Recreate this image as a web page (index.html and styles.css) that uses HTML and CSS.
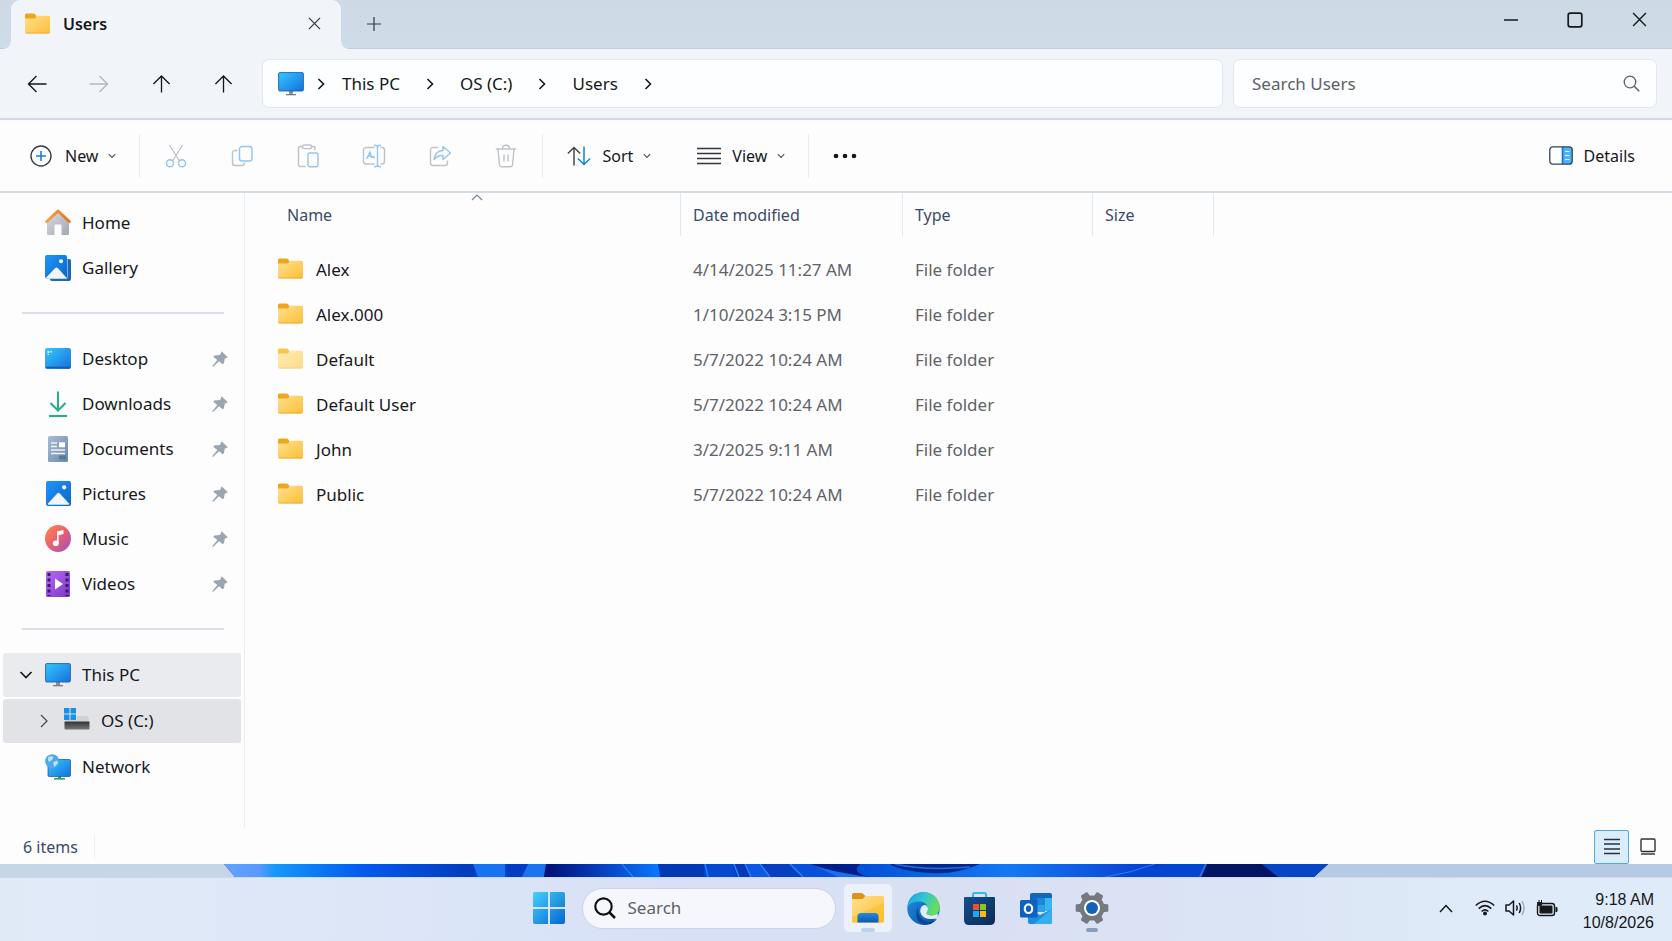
FILE: index.html
```html
<!DOCTYPE html>
<html lang="en">
<head>
<meta charset="utf-8">
<meta name="viewport" content="width=device-width, initial-scale=1">
<title>Users - File Explorer</title>
<link rel="stylesheet" href="styles.css">
</head>
<body>
<svg class="sprite" aria-hidden="true">
  <defs>
    <linearGradient id="gFolder" x1="0" y1="0" x2="1" y2="1"><stop offset="0" stop-color="#ffe090"/><stop offset="1" stop-color="#fcbf35"/></linearGradient>
    <linearGradient id="gFolderPale" x1="0" y1="0" x2="1" y2="1"><stop offset="0" stop-color="#ffebb5"/><stop offset="1" stop-color="#fcdc8a"/></linearGradient>
    <linearGradient id="gScreen" x1="0" y1="0" x2="1" y2="1"><stop offset="0" stop-color="#35c8fb"/><stop offset="1" stop-color="#1670e0"/></linearGradient>
    <linearGradient id="gPhoto" x1="0" y1="0" x2="1" y2="1"><stop offset="0" stop-color="#2196f8"/><stop offset="1" stop-color="#0866c8"/></linearGradient>
    <linearGradient id="gHouse" x1="0" y1="0" x2="1" y2="1"><stop offset="0" stop-color="#d9dce2"/><stop offset="1" stop-color="#a3a7b2"/></linearGradient>
    <linearGradient id="gRoof" x1="0" y1="0" x2="1" y2="0"><stop offset="0" stop-color="#f7a045"/><stop offset="1" stop-color="#e8741d"/></linearGradient>
    <linearGradient id="gDoc" x1="0" y1="0" x2="1" y2="1"><stop offset="0" stop-color="#a9bdd3"/><stop offset="1" stop-color="#6a88aa"/></linearGradient>
    <linearGradient id="gMusic" x1="0" y1="0" x2="1" y2="1"><stop offset="0" stop-color="#ff8a55"/><stop offset=".5" stop-color="#e85f70"/><stop offset="1" stop-color="#9a52c8"/></linearGradient>
    <linearGradient id="gVideo" x1="0" y1="0" x2="1" y2="1"><stop offset="0" stop-color="#b66bf2"/><stop offset="1" stop-color="#7c35c9"/></linearGradient>
    <linearGradient id="gStart" x1="0" y1="0" x2="1" y2="1"><stop offset="0" stop-color="#45d0fb"/><stop offset="1" stop-color="#0567cf"/></linearGradient>
    <linearGradient id="gDrive" x1="0" y1="0" x2="0" y2="1"><stop offset="0" stop-color="#333"/><stop offset="1" stop-color="#777"/></linearGradient>
    <linearGradient id="gStore" x1="0" y1="0" x2="1" y2="1"><stop offset="0" stop-color="#14508e"/><stop offset="1" stop-color="#0c2a56"/></linearGradient>
    <linearGradient id="gEdgeTop" x1="0" y1="0" x2="1" y2=".4"><stop offset="0" stop-color="#1e9be0"/><stop offset=".5" stop-color="#2fc4d8"/><stop offset="1" stop-color="#68dd5a"/></linearGradient>
    <linearGradient id="gEdgeLeft" x1="0" y1="0" x2="1" y2="1"><stop offset="0" stop-color="#1d8fe0"/><stop offset="1" stop-color="#0a50a8"/></linearGradient>
    <linearGradient id="gTray" x1="0" y1="0" x2="0" y2="1"><stop offset="0" stop-color="#2388df"/><stop offset="1" stop-color="#0a5bb0"/></linearGradient>
    <linearGradient id="gWallA" x1="0" y1="0" x2="1" y2="0"><stop offset="0" stop-color="#5fa5ff"/><stop offset=".14" stop-color="#5a98ff"/><stop offset=".2" stop-color="#1798fb"/><stop offset=".36" stop-color="#0a7cf4"/><stop offset=".56" stop-color="#0458ee"/><stop offset="1" stop-color="#023cb8"/></linearGradient>
    <linearGradient id="gWallB" x1="0" y1="0" x2="1" y2="0"><stop offset="0" stop-color="#020f72"/><stop offset=".4" stop-color="#0535b0"/><stop offset="1" stop-color="#0878ff"/></linearGradient>
    <linearGradient id="gWallC" x1="0" y1="0" x2="1" y2="0"><stop offset="0" stop-color="#0050d8"/><stop offset=".5" stop-color="#1478f4"/><stop offset="1" stop-color="#0838cc"/></linearGradient>
  </defs>
  <symbol id="folder" viewBox="0 0 25 21"><path d="M0 3V2Q0 .5 1.500 .5H8.500Q9.500 .5 10.300 1.500L11.500 3V8H0Z" fill="#eea71c"/><path d="M0 5.500H9Q10.500 5.500 11 4Q11.600 2.700 13 2.700H23.500Q25 2.700 25 4.200V19Q25 20.500 23.500 20.500H1.500Q0 20.500 0 19Z" fill="url(#gFolder)"/><path d="M.8 20H24.200" stroke="#e9a72c" stroke-width=".8"/></symbol>
  <symbol id="folder-pale" viewBox="0 0 25 21"><path d="M0 3V2Q0 .5 1.500 .5H8.500Q9.500 .5 10.300 1.500L11.500 3V8H0Z" fill="#f9c646"/><path d="M0 5.500H9Q10.500 5.500 11 4Q11.600 2.700 13 2.700H23.500Q25 2.700 25 4.200V19Q25 20.500 23.500 20.500H1.500Q0 20.500 0 19Z" fill="url(#gFolderPale)"/><path d="M.8 20H24.200" stroke="#efcf7e" stroke-width=".8"/></symbol>
  <symbol id="pc" viewBox="0 0 26 24"><path d="M11 19h4v3h-4z" fill="#8b9097"/><path d="M8 22h10v1.300H8z" fill="#777d85"/><rect x=".6" y=".6" width="24.800" height="18.400" rx="1.200" fill="url(#gScreen)" stroke="#1b62b0" stroke-width=".9"/></symbol>
  <symbol id="chev-right" viewBox="0 0 8 14"><path d="M1.500 2l5 5-5 5" fill="none" stroke="currentColor" stroke-width="1.600"/></symbol>
  <symbol id="chev-down" viewBox="0 0 8 6"><path d="M.8 1.200L4 4.400l3.200-3.200" fill="none" stroke="currentColor" stroke-width="1.100"/></symbol>
  <symbol id="up" viewBox="0 0 20 20"><path d="M10 19V1.500M1.500 10L10 1.500 18.500 10" fill="none" stroke="currentColor" stroke-width="1.400"/></symbol>
  <symbol id="left" viewBox="0 0 20 18"><path d="M19.500 9H1.500M9.500 1L1.500 9l8 8" fill="none" stroke="currentColor" stroke-width="1.400"/></symbol>
  <symbol id="pin" viewBox="0 0 16 16"><path d="M9.500 .3L15.800 6.200 14 7.200 12.800 7.500 11.900 12.300 10.700 13.300 7 10.200 1 15.900 .2 15.200 5.300 9 1.200 5.700 2.400 4.600 7.800 3.900 8.700 2.800Z" fill="#9aa5b1"/></symbol>
  <symbol id="cross" viewBox="0 0 14 14"><path d="M1 1l12 12M13 1L1 13" fill="none" stroke="currentColor" stroke-width="1.300"/></symbol>
</svg>

<div class="window">
  <header class="titlebar">
    <div class="tab">
      <svg class="ic-folder"><use href="#folder"/></svg>
      <span class="tab-title">Users</span>
      <button class="tab-close" aria-label="Close tab"><svg width="13" height="13"><use href="#cross"/></svg></button>
    </div>
    <button class="tab-add" aria-label="New tab"><svg width="14" height="14" viewBox="0 0 14 14"><path d="M7 0v14M0 7h14" stroke="currentColor" stroke-width="1.200"/></svg></button>
    <div class="win-controls">
      <button aria-label="Minimize"><svg width="14" height="14" viewBox="0 0 14 14"><path d="M0 7h14" stroke="currentColor" stroke-width="1.500"/></svg></button>
      <button aria-label="Maximize"><svg width="16" height="16" viewBox="0 0 16 16"><rect x="1.200" y="1.200" width="13.600" height="13.600" rx="2" fill="none" stroke="currentColor" stroke-width="1.700"/></svg></button>
      <button aria-label="Close"><svg width="15" height="15"><use href="#cross"/></svg></button>
    </div>
  </header>

  <div class="navbar">
    <nav class="nav-buttons" aria-label="History">
      <button aria-label="Back"><svg width="20" height="18"><use href="#left"/></svg></button>
      <button class="is-off flip" aria-label="Forward" disabled><svg width="20" height="18"><use href="#left"/></svg></button>
      <button aria-label="Recent"><svg width="19" height="20"><use href="#up"/></svg></button>
      <button aria-label="Up"><svg width="19" height="20"><use href="#up"/></svg></button>
    </nav>
    <nav class="address" aria-label="Address">
      <svg class="ic-pc"><use href="#pc"/></svg>
      <svg class="sep first"><use href="#chev-right"/></svg>
      <a href="#">This PC</a>
      <svg class="sep"><use href="#chev-right"/></svg>
      <a href="#">OS (C:)</a>
      <svg class="sep"><use href="#chev-right"/></svg>
      <a href="#">Users</a>
      <svg class="sep"><use href="#chev-right"/></svg>
    </nav>
    <label class="search">
      <input type="text" placeholder="Search Users" aria-label="Search Users">
      <svg width="17" height="17" viewBox="0 0 17 17"><circle cx="7" cy="7" r="5.800" fill="none" stroke="currentColor" stroke-width="1.300"/><path d="M11.200 11.200L16.200 16.200" stroke="currentColor" stroke-width="1.500"/></svg>
    </label>
  </div>

  <div class="toolbar" role="toolbar">
    <button class="cmd cmd-new"><svg width="22" height="22" viewBox="0 0 22 22"><circle cx="11" cy="11" r="10" fill="none" stroke="#3a3f45" stroke-width="1.400"/><path d="M11 6v10M6 11h10" stroke="#1683e0" stroke-width="1.600"/></svg>New<svg class="caret"><use href="#chev-down"/></svg></button>
    <span class="rule"></span>
    <div class="tools">
      <button disabled aria-label="Cut"><svg width="22" height="24" viewBox="0 0 22 24"><g fill="none" stroke-width="1.400"><path d="M4.500 1L14.500 17M17.500 1L7.500 17" stroke="#bfc2c7"/><circle cx="5" cy="19.300" r="3.500" stroke="#94c4f0"/><circle cx="17" cy="19.300" r="3.500" stroke="#94c4f0"/></g></svg></button>
      <button disabled aria-label="Copy"><svg width="22" height="22" viewBox="0 0 22 22"><g fill="none" stroke-width="1.400"><path d="M6.500 5.500H4Q1.500 5.500 1.500 8v10Q1.500 20.500 4 20.500H11Q13.500 20.500 13.500 17.500" stroke="#bfc2c7"/><rect x="8.500" y="1.500" width="12.500" height="14.500" rx="2.500" stroke="#94c4f0"/></g></svg></button>
      <button disabled aria-label="Paste"><svg width="22" height="24" viewBox="0 0 22 24"><g fill="none" stroke-width="1.400"><path d="M8.500 22.500H3Q1.500 22.500 1.500 21V4Q1.500 2.500 3 2.500H5.500M14 2.500H16.500Q18 2.500 18 4V6.500" stroke="#bfc2c7"/><rect x="5.500" y="1" width="9" height="3.600" rx="1.600" stroke="#bfc2c7"/><rect x="11" y="9" width="10" height="13.700" rx="1.600" stroke="#94c4f0"/></g></svg></button>
      <button disabled aria-label="Rename"><svg width="24" height="24" viewBox="0 0 24 24"><g fill="none" stroke-width="1.400"><path d="M12.500 3.500H4Q1.500 3.500 1.500 6v11Q1.500 20 4 20H12.500M18.500 3.500H20Q22.500 3.500 22.500 6V17Q22.500 20 20 20H18.500" stroke="#bfc2c7"/><path d="M15.500 2v20M12 1.200Q15.500 1.200 15.500 3Q15.500 1.200 19 1.200M12 22.800Q15.500 22.800 15.500 21Q15.500 22.800 19 22.800M4.500 15L8 8 9.500 13.500 11.500 12.500 12.500 14.500M5.500 12.500L9 11.500" stroke="#94c4f0"/></g></svg></button>
      <button disabled aria-label="Share"><svg width="23" height="22" viewBox="0 0 23 22"><g fill="none" stroke-width="1.400" stroke-linejoin="round"><path d="M9 2.500H4Q1.500 2.500 1.500 5V17.500Q1.500 20.500 4 20.500H16Q18.500 20.500 18.500 17.500V15.500" stroke="#bfc2c7"/><path d="M14 1.500L21.500 8 14 14.500V10.500Q8.500 10 5 14.500Q6.500 5.500 14 5.500Z" stroke="#94c4f0"/></g></svg></button>
      <button disabled aria-label="Delete"><svg width="22" height="24" viewBox="0 0 22 24"><g fill="none" stroke="#bfc2c7" stroke-width="1.400"><path d="M.8 5H21.200M7.500 4.500Q7.500 1.200 11 1.200T14.500 4.500M3 5L4.500 21Q4.700 22.700 6.500 22.700H15.500Q17.300 22.700 17.500 21L19 5M9 10.500V17.500M13 10.500V17.500"/></g></svg></button>
    </div>
    <span class="rule"></span>
    <button class="cmd cmd-sort"><svg width="24" height="20" viewBox="0 0 24 20"><g fill="none" stroke-width="1.500"><path d="M7 19.500V1.500M.8 7.500L7 1.500l6.200 6" stroke="#44484e"/><path d="M17 .5V18.500M10.800 12.500L17 18.500l6.200-6" stroke="#1683e0"/></g></svg>Sort<svg class="caret"><use href="#chev-down"/></svg></button>
    <button class="cmd cmd-view"><svg width="24" height="18" viewBox="0 0 24 18"><path d="M0 1.500H24M0 6.500H24M0 11.500H24M0 16.500H24" stroke="#33373c" stroke-width="1.300"/></svg>View<svg class="caret"><use href="#chev-down"/></svg></button>
    <span class="rule"></span>
    <button class="more" aria-label="See more"><svg width="24" height="6" viewBox="0 0 24 6"><g fill="#16181b"><circle cx="3" cy="3" r="2.300"/><circle cx="12" cy="3" r="2.300"/><circle cx="21" cy="3" r="2.300"/></g></svg></button>
    <button class="cmd cmd-details"><svg width="24" height="19" viewBox="0 0 24 19"><rect x=".8" y=".8" width="22.400" height="17.400" rx="3" fill="#fff"/><path d="M13 .8H20Q23.200 .8 23.200 4V15Q23.200 18.200 20 18.200H13Z" fill="#4db4f5"/><path d="M16 5.500H20.500M16 9.500H20.500M16 13.500H20.500" stroke="#e3f4ff" stroke-width="1.200"/><path d="M13.500 1V18" stroke="#1272cc" stroke-width="1.600"/><rect x=".8" y=".8" width="22.400" height="17.400" rx="3" fill="none" stroke="#31465c" stroke-width="1.300"/></svg>Details</button>
  </div>

  <div class="body">
    <aside class="sidebar">
      <ul class="places">
        <li><a href="#"><span class="ico"><svg width="26" height="27" viewBox="0 0 26 27"><path d="M2 12L13 2.500 24 12V24.500Q24 26 22.500 26H16.500V16.500Q16.500 15.500 15.500 15.500H10.500Q9.500 15.500 9.500 16.500V26H3.500Q2 26 2 24.500Z" fill="url(#gHouse)"/><path d="M1.700 12.500L13 2 24.300 12.500" fill="none" stroke="url(#gRoof)" stroke-width="3" stroke-linecap="round" stroke-linejoin="round"/></svg></span>Home</a></li>
        <li><a href="#"><span class="ico"><svg width="26" height="26" viewBox="0 0 26 26"><rect x="5" y="4" width="21" height="22" rx="2" fill="#1c69bb"/><rect x="0" y="0" width="22.500" height="24" rx="2" fill="#e9f3fd"/><rect x="0" y="0" width="22" height="23.500" rx="2" fill="url(#gPhoto)"/><path d="M1 22.800L10.200 13Q11.500 11.800 12.800 13L21.500 22.800Q21 23.500 20 23.500H2.500Q1.500 23.500 1 22.800Z" fill="#f1f5fd"/><circle cx="16" cy="6.200" r="2" fill="#fff"/></svg></span>Gallery</a></li>
      </ul>
      <hr>
      <ul class="places">
        <li><a href="#"><span class="ico"><svg width="26" height="21" viewBox="0 0 26 21"><rect width="26" height="21" rx="2" fill="url(#gScreen)"/><path d="M1 19.500H25" stroke="#115bb8" stroke-width="1.600"/><path d="M2.500 3h2v2h-2zM5.500 3h1.500v1.500H5.500zM2.500 6h1.500v1H2.500z" fill="#dff6ff"/></svg></span>Desktop<svg class="pin"><use href="#pin"/></svg></a></li>
        <li><a href="#"><span class="ico"><svg width="20" height="26" viewBox="0 0 20 26"><path d="M10 .5V19M2.500 12L10 19.500 17.500 12M1 25H19" fill="none" stroke="#20b08c" stroke-width="2"/></svg></span>Downloads<svg class="pin"><use href="#pin"/></svg></a></li>
        <li><a href="#"><span class="ico"><svg width="20" height="26" viewBox="0 0 20 26"><rect width="20" height="26" rx="1.600" fill="url(#gDoc)"/><path d="M3 7H9M3 10.500H9M3 14H17M3 17.500H17" stroke="#eef4fa" stroke-width="1.300"/><rect x="11" y="6.300" width="6" height="5" fill="#fff"/><rect x="11" y="19.500" width="7" height="4" fill="#56789c"/></svg></span>Documents<svg class="pin"><use href="#pin"/></svg></a></li>
        <li><a href="#"><span class="ico"><svg width="25" height="25" viewBox="0 0 25 25"><rect width="25" height="25" rx="2" fill="url(#gPhoto)"/><path d="M1.500 23L11.200 12.500Q12.500 11.200 13.800 12.500L23.500 23Q23 23.700 22 23.700H3Q2 23.700 1.500 23Z" fill="#f1f5fd"/><circle cx="18.200" cy="6.300" r="2.100" fill="#fff"/></svg></span>Pictures<svg class="pin"><use href="#pin"/></svg></a></li>
        <li><a href="#"><span class="ico"><svg width="26" height="27" viewBox="0 0 26 27"><ellipse cx="13" cy="13.500" rx="13" ry="13.500" fill="url(#gMusic)"/><path d="M12 6.500L18.500 5V9L13.600 10.200V17.500L12 18Z" fill="#fff"/><ellipse cx="10.800" cy="18.200" rx="3" ry="2.800" fill="#fff"/></svg></span>Music<svg class="pin"><use href="#pin"/></svg></a></li>
        <li><a href="#"><span class="ico"><svg width="24" height="26" viewBox="0 0 24 26"><rect width="24" height="26" rx="1.600" fill="url(#gVideo)"/><path d="M3 2V25M21 2V25" stroke="#3c1673" stroke-width="3" stroke-dasharray="3 2.500"/><path d="M9 7.500L17 13 9 18.500Z" fill="#fff"/></svg></span>Videos<svg class="pin"><use href="#pin"/></svg></a></li>
      </ul>
      <hr>
      <ul class="places tree">
        <li class="open"><a href="#"><svg class="twist" width="14" height="10" viewBox="0 0 14 10"><path d="M1.500 2L7 7.500 12.500 2" fill="none" stroke="currentColor" stroke-width="1.700"/></svg><span class="ico"><svg class="ic-pc"><use href="#pc"/></svg></span>This PC</a></li>
        <li class="selected child"><a href="#"><svg class="twist" width="14" height="14" viewBox="0 0 14 14"><path d="M4 1L10 7 4 13" fill="none" stroke="currentColor" stroke-width="1.300"/></svg><span class="ico"><svg width="26" height="26" viewBox="0 0 26 26"><path d="M13 8H22Q24 8 25 11L25.500 14H1L2 12H13Z" fill="#cfd1d4"/><rect x=".5" y="13.500" width="25" height="8" rx=".8" fill="url(#gDrive)"/><path d="M0 0h5.500v5.500H0zM6.500 0H12v5.500H6.500zM0 6.500h5.500V12H0zM6.500 6.500H12V12H6.500z" fill="#1b8fe4"/></svg></span>OS (C:)</a></li>
        <li><a href="#"><span class="ico"><svg width="26" height="26" viewBox="0 0 26 26"><path d="M13 22h3v2.500h-3z" fill="#2f9c63"/><path d="M9 24h11v1.600H9z" fill="#2f9c63"/><rect x="3" y="5.500" width="22.500" height="17" rx="1.200" fill="url(#gScreen)" stroke="#1b62b0" stroke-width=".8"/><circle cx="7.200" cy="7.200" r="7" fill="#4fa8ea"/><path d="M3 3.500Q6 1.500 8.500 3L7 6 3.500 8ZM8 8.500L12 6.500 13 9 9.500 13Z" fill="#bfe4fb"/></svg></span>Network</a></li>
      </ul>
    </aside>

    <main class="content">
      <table class="files">
        <colgroup><col class="c-name"><col class="c-date"><col class="c-type"><col class="c-size"></colgroup>
        <thead>
          <tr><th scope="col"><svg class="sorted" width="12" height="7" viewBox="0 0 12 7"><path d="M1 6L6 1l5 5" fill="none" stroke="#7e838b" stroke-width="1.200"/></svg>Name</th><th scope="col">Date modified</th><th scope="col">Type</th><th scope="col">Size</th></tr>
        </thead>
        <tbody>
          <tr><td><div class="name"><svg class="ic-folder"><use href="#folder"/></svg>Alex</div></td><td>4/14/2025 11:27 AM</td><td>File folder</td><td></td></tr>
          <tr><td><div class="name"><svg class="ic-folder"><use href="#folder"/></svg>Alex.000</div></td><td>1/10/2024 3:15 PM</td><td>File folder</td><td></td></tr>
          <tr><td><div class="name"><svg class="ic-folder"><use href="#folder-pale"/></svg>Default</div></td><td>5/7/2022 10:24 AM</td><td>File folder</td><td></td></tr>
          <tr><td><div class="name"><svg class="ic-folder"><use href="#folder"/></svg>Default User</div></td><td>5/7/2022 10:24 AM</td><td>File folder</td><td></td></tr>
          <tr><td><div class="name"><svg class="ic-folder"><use href="#folder"/></svg>John</div></td><td>3/2/2025 9:11 AM</td><td>File folder</td><td></td></tr>
          <tr><td><div class="name"><svg class="ic-folder"><use href="#folder"/></svg>Public</div></td><td>5/7/2022 10:24 AM</td><td>File folder</td><td></td></tr>
        </tbody>
      </table>
    </main>
  </div>

  <footer class="statusbar">
    <span class="count">6 items</span>
    <div class="view-modes">
      <button class="active" aria-label="Details view"><svg width="16" height="17" viewBox="0 0 16 17"><path d="M0 1.500H16M0 6H16M0 11H16M0 15.500H16" stroke="#2d3136" stroke-width="1.400"/></svg></button>
      <button aria-label="Large icons view"><svg width="16" height="17" viewBox="0 0 16 17"><rect x="1" y="1" width="14" height="12.500" rx="1.200" fill="none" stroke="#2d3136" stroke-width="1.400"/><path d="M1 16H15" stroke="#2d3136" stroke-width="1.400"/></svg></button>
    </div>
  </footer>
</div>

<svg class="wallpaper" viewBox="0 0 1672 13" preserveAspectRatio="none" aria-hidden="true">
  <path d="M224 0H1328L1314 13H235Z" fill="#0345d0"/>
  <path d="M224 0H475V13H235Z" fill="url(#gWallA)"/>
  <path d="M473 0H505V13H478Z" fill="#1873f2"/>
  <path d="M507 0H528L522 13H507Z" fill="#023cc0"/>
  <path d="M528 0H546L544 13H522Z" fill="#1a74f0"/>
  <path d="M546 0H658L660 13H544Z" fill="url(#gWallB)"/>
  <path d="M622 0Q627 6 633 13" stroke="#3c96ff" stroke-width="1" fill="none"/>
  <path d="M658 0H704V13H661Z" fill="#0238b4"/>
  <path d="M704 0H732L736 13H709Z" fill="#0648d0"/>
  <path d="M733 0H745L750 13H737Z" fill="#0539b6"/>
  <path d="M746 0H761L769 13H750Z" fill="#0a58e4"/>
  <path d="M761 0H790L803 13H769Z" fill="#053fc0"/>
  <path d="M790 0H811L840 13H803Z" fill="#0750dc"/>
  <path d="M705 0L708 13M734 0L739 13M745 0L751 13M760 0L770 13M790 0L803 13" stroke="#2583f5" stroke-width="1.500" fill="none"/>
  <path d="M811 0H900V13H840Z" fill="#021f88"/>
  <path d="M811 0Q830 8 870 13H838Z" fill="#1670f0"/>
  <path d="M860 0H1165Q1140 9 1110 13H870Q850 9 860 0Z" fill="url(#gWallC)"/>
  <path d="M890 0H980Q955 11 930 9Q900 7 890 0Z" fill="#032889"/>
  <path d="M895 0Q925 7 970 3" stroke="#1e6fe2" stroke-width="1.500" fill="none"/>
  <path d="M1155 0Q1130 9 1105 13" stroke="#2a7cf5" stroke-width="1" fill="none"/>
  <path d="M1206 0H1328L1314 13H1200Z" fill="#031462"/>
  <path d="M1206 0L1200 13" stroke="#2f6ee8" stroke-width="2"/>
  <path d="M1262 0H1328L1314 13H1278Z" fill="#0646c4"/>
</svg>

<footer class="taskbar">
  <div class="pinned">
    <button class="start" aria-label="Start"><svg width="32" height="32" viewBox="0 0 32 32"><path d="M2 0H15V15H0V2Q0 0 2 0ZM17 0H30Q32 0 32 2V15H17ZM0 17H15V32H2Q0 32 0 30ZM17 17H32V30Q32 32 30 32H17Z" fill="url(#gStart)"/></svg></button>
    <label class="task-search">
      <svg width="22" height="22" viewBox="0 0 22 22"><circle cx="9.500" cy="9.500" r="8.200" fill="none" stroke="#111" stroke-width="2.200"/><path d="M15.500 15.500L21 21" stroke="#111" stroke-width="2.500"/></svg>
      <input type="text" placeholder="Search" aria-label="Search">
    </label>
    <button class="app current" aria-label="File Explorer"><svg width="32" height="30" viewBox="0 0 32 30"><path d="M0 2Q0 0 2 0H10L13.500 3V9H0Z" fill="#dd9412"/><path d="M0 6H10.500L13.500 3H30.500Q32 3 32 4.500V28Q32 29.500 30.500 29.500H1.500Q0 29.500 0 28Z" fill="url(#gFolder)"/><path d="M0 24L32 10V28Q32 29.500 30.500 29.500H1.500Q0 29.500 0 28Z" fill="#fcc022" opacity=".6"/><path d="M5.500 29.500V23.500Q5.500 20 9 20H23Q26.500 20 26.500 23.500V29.500Z" fill="url(#gTray)"/></svg></button>
    <button class="app" aria-label="Edge"><svg width="33" height="33" viewBox="0 0 33 33"><circle cx="16.500" cy="16.500" r="16.200" fill="url(#gEdgeLeft)"/><path d="M.4 15Q2 .3 16.500 .3C27 .3 32.700 8 32.700 15.500C32.700 21 28.500 23.500 24.500 23.500C21.500 23.500 19.500 22.500 19.500 21.300C19.500 20 21 19.500 21 17C21 13 17.500 9.500 12 9.500C6 9.500 1.800 12 .4 15Z" fill="url(#gEdgeTop)"/><path d="M11.500 14.500C9.500 21 13.500 29.500 22.500 29.500C26 29.500 28 28.500 30 26.500C26.500 32.500 20 33.500 15.500 32.600C9 30 7.500 20 11.500 14.500Z" fill="#0b4796"/><path d="M13.200 19Q13.500 12.800 18.500 13C20.500 14.500 21 16 21 17C21 19.500 19.500 20 19.500 21.300C19.500 22.500 21.500 23.500 24.500 23.500C27 23.500 30 22.500 31.200 21L30.200 26.200C26 27.500 14.500 28.500 13.200 19Z" fill="#e4ecf8"/></svg></button>
    <button class="app" aria-label="Microsoft Store"><svg width="31" height="33" viewBox="0 0 31 33"><path d="M9 6V2.500Q9 1 10.500 1H20.500Q22 1 22 2.500V6" fill="none" stroke="#3cb4e6" stroke-width="2"/><path d="M0 6Q0 5 1 5H30Q31 5 31 6V28Q31 33 26 33H5Q0 33 0 28Z" fill="url(#gStore)"/><path d="M9 12h6v6H9z" fill="#f0512a"/><path d="M16 12h6v6h-6z" fill="#86c91f"/><path d="M9 19h6v6H9z" fill="#25a4ea"/><path d="M16 19h6v6h-6z" fill="#fbb917"/></svg></button>
    <button class="app" aria-label="Outlook"><svg width="32" height="31" viewBox="0 0 32 31"><path d="M10 2Q10 0 12 0H30Q32 0 32 2V18H10Z" fill="#1267bd"/><path d="M17 5H25V12H17Z" fill="#1a86dc"/><path d="M25 5H32V18H25Z" fill="#38b6f2"/><path d="M17 12H25V19H17Z" fill="#2f9fe8"/><path d="M8 16L20 22 32 16V29Q32 31 30 31H10Q8 31 8 29Z" fill="#1c8ee0"/><path d="M32 16L14 31H30Q32 31 32 29Z" fill="#36aef0"/><rect y="7" width="17.500" height="17.500" rx="1.600" fill="#0d62bf"/><ellipse cx="8.500" cy="15.700" rx="3.700" ry="4.300" fill="none" stroke="#fff" stroke-width="2.200"/></svg></button>
    <button class="app running" aria-label="Settings"><svg width="34" height="34" viewBox="-17 -17 34 34"><g fill="#73797f"><circle r="12.500"/><path id="tooth" d="M-4.500 -10L-3.600 -16.300H3.600L4.500 -10Z" transform="rotate(30)"/><use href="#tooth" transform="rotate(60)"/><use href="#tooth" transform="rotate(120)"/><use href="#tooth" transform="rotate(180)"/><use href="#tooth" transform="rotate(240)"/><use href="#tooth" transform="rotate(300)"/></g><circle r="8" fill="#fff"/><circle r="6" fill="#1461b8"/></svg></button>
  </div>
  <div class="tray">
    <button aria-label="Show hidden icons"><svg width="14" height="9" viewBox="0 0 14 9"><path d="M1 8L7 1.500 13 8" fill="none" stroke="currentColor" stroke-width="1.500"/></svg></button>
    <button class="status" aria-label="Network, volume and battery">
      <svg width="20" height="16" viewBox="0 0 20 16"><g fill="none" stroke="currentColor" stroke-width="1.600"><path d="M.8 5.500Q10-3 19.200 5.500M3.700 8.600Q10 2.800 16.300 8.600M6.600 11.500Q10 8.400 13.400 11.500"/></g><circle cx="10" cy="13.600" r="2" fill="currentColor"/></svg>
      <svg width="21" height="18" viewBox="0 0 21 18"><g fill="none" stroke="currentColor" stroke-width="1.500"><path d="M1 6H4L8.500 2V16L4 12H1Z" stroke-linejoin="round"/><path d="M11.500 6.300Q13 9 11.500 11.700M14.200 4Q17 9 14.200 14"/><path d="M17 2Q21 9 17 16" stroke="#a3adb9"/></g></svg>
      <svg width="22" height="18" viewBox="0 0 22 18"><rect x="1.500" y="4.500" width="17" height="12" rx="2.500" fill="none" stroke="currentColor" stroke-width="1.400"/><rect x="3.500" y="6.500" width="13" height="8" rx="1" fill="currentColor"/><path d="M19.500 8H20.500Q21.500 8 21.500 9V12Q21.500 13 20.500 13H19.500Z" fill="currentColor"/><path d="M1 3H2.500V1H3.500V3H5V1H6V3Q7 6.500 4.500 7H3Q1 6.500 1 3Z" fill="currentColor"/></svg>
    </button>
    <button class="clock"><span>9:18 AM</span><span>10/8/2026</span></button>
  </div>
</footer>
</body>
</html>
```
FILE: styles.css
```css
* { box-sizing: border-box; }

body {
  margin: 0;
  min-height: 100vh;
  display: flex;
  flex-direction: column;
  background: #c9d7e6;
  color: #16181b;
  font-family: "Noto Sans", "Open Sans", sans-serif;
  font-size: 16px;
  line-height: 24px;
}

button {
  margin: 0;
  padding: 0;
  border: 0;
  background: none;
  color: inherit;
  font: inherit;
  display: flex;
  align-items: center;
  justify-content: center;
}

input {
  flex: 1;
  min-width: 0;
  padding: 0;
  border: 0;
  outline: 0;
  background: none;
  color: inherit;
  font: inherit;
}

input::placeholder { color: #5d6167; opacity: 1; }
a { color: inherit; text-decoration: none; }
svg { display: block; flex: none; }

.sprite { position: absolute; width: 0; height: 0; }
.ic-folder { width: 25px; height: 21px; }
.ic-pc { width: 26px; height: 24px; }

.window {
  flex: 1;
  display: flex;
  flex-direction: column;
  background: #fdfdfe;
}

/* Title bar */
.titlebar {
  height: 49px;
  display: flex;
  padding-left: 11px;
  background: linear-gradient(#cddae6, #cfdbe7);
  box-shadow: inset 0 -1px #c0ceda;
}

.tab {
  position: relative;
  width: 330px;
  display: flex;
  align-items: center;
  padding: 0 14px 2px;
  border-radius: 9px 9px 0 0;
  background: #f1f5f9;
}

.tab::before,
.tab::after {
  content: "";
  position: absolute;
  bottom: 0;
  width: 7px;
  height: 7px;
}
.tab::before { right: 100%; background: radial-gradient(circle at 0 0, transparent 6px, #f1f5f9 7px); }
.tab::after { left: 100%; background: radial-gradient(circle at 100% 0, transparent 6px, #f1f5f9 7px); }

.tab-title { flex: 1; padding-left: 13px; font-weight: 600; }
.tab-close { width: 26px; height: 26px; color: #33373c; }
.tab-add { width: 40px; padding-bottom: 2px; margin-left: 13px; color: #33373c; }
.win-controls { margin-left: auto; display: flex; height: 39px; padding-right: 1px; }
.win-controls button { width: 64px; }

/* Navigation row */
.navbar {
  display: flex;
  align-items: center;
  padding: 10px 15px 10px 13px;
  border-bottom: 2px solid #cfdae6;
  background: #f1f5f9;
}

.nav-buttons { display: flex; gap: 14px; margin-right: 15px; }
.nav-buttons button { width: 48px; height: 48px; }
.nav-buttons .is-off { color: #b3b8be; }
.flip svg { transform: scaleX(-1); }

.address,
.search {
  height: 49px;
  display: flex;
  align-items: center;
  border: 1px solid #e0e7ee;
  border-radius: 7px;
  background: #fdfeff;
}

.address { flex: 1; padding-left: 15px; font-size: 17px; }
.address .sep { width: 8px; height: 14px; margin: 0 26px; }
.address .sep.first { margin: 0 17px 0 13px; }

.search {
  width: 424px;
  margin-left: 10px;
  padding: 0 16px 0 18px;
  color: #5d6167;
  font-size: 17px;
}

/* Command bar */
.toolbar {
  height: 73px;
  display: flex;
  align-items: center;
  padding: 0 37px 0 30px;
  border-bottom: 2px solid #d3dde8;
}

.cmd { height: 44px; }
.caret { width: 8px; height: 6px; margin-left: 10px; color: #4a4e54; }
.cmd > svg:first-child { margin-right: 11px; }
.cmd-new { margin-right: 23px; }
.cmd-new > svg:first-child { margin-right: 13px; }
.rule { width: 1px; height: 44px; background: #e6ebf0; }
.tools { display: flex; gap: 18px; margin: 0 12px; }
.tools button { width: 48px; height: 44px; }
.cmd-sort { margin: 0 46px 0 24px; }
.cmd-view { margin-right: 23px; }
.more { width: 48px; height: 44px; margin-left: 12px; }
.cmd-details { margin-left: auto; }

/* Sidebar */
.body { flex: 1; display: flex; }

.sidebar {
  width: 245px;
  padding: 7px 3px 0;
  border-right: 1px solid #e9eef4;
}

.sidebar hr {
  height: 2px;
  margin: 22px 17px 22px 19px;
  border: 0;
  background: #dbe0e8;
}

.places {
  margin: 0;
  padding: 0;
  list-style: none;
  font-size: 17px;
}

.places a {
  position: relative;
  height: 45px;
  display: flex;
  align-items: center;
  padding: 0 13px 0 42px;
  border-radius: 3px;
}

.ico { width: 26px; margin-right: 11px; display: flex; justify-content: center; }
.pin { width: 16px; height: 16px; margin-left: auto; }
.tree { display: grid; gap: 2px; padding-top: 1px; }
.tree a { height: 44px; }
.tree .open a { background: #e9ebef; }
.tree .selected a { background: #e1e3e7; }
.tree .child a { padding-left: 61px; }
.twist { position: absolute; left: 16px; }
.child .twist { left: 34px; color: #4a4e54; }

/* File list */
.content { flex: 1; min-width: 0; padding-left: 28px; }

.files {
  table-layout: fixed;
  width: 941px;
  border-collapse: separate;
  border-spacing: 0;
}

.c-name { width: 408px; }
.c-date { width: 222px; }
.c-type { width: 190px; }
.c-size { width: 121px; }

.files th {
  position: relative;
  height: 43px;
  padding: 0 0 0 12px;
  border-right: 1px solid #e3e8ee;
  color: #3b4a6b;
  font-weight: 400;
  text-align: left;
}
.files th:first-child { padding-left: 14px; }
.sorted { position: absolute; top: 1px; left: calc(50% - 6px); }

.files tbody::before { content: ""; display: block; height: 11px; }
.files td { height: 45px; padding: 0 0 0 12px; color: #5f6369; font-size: 17px; }
.files td:first-child { padding-left: 5px; }
.name { display: flex; align-items: center; gap: 13px; color: #16181b; }
.name .ic-folder { margin-bottom: 3px; }

/* Status bar */
.statusbar {
  height: 36px;
  display: flex;
  align-items: center;
  justify-content: space-between;
  padding: 1px 10px 0 23px;
  color: #3b4a6b;
}

.count { padding-right: 16px; border-right: 1px solid #edf0f4; }
.view-modes { display: flex; gap: 5px; }
.view-modes button { width: 28px; height: 34px; }
.view-modes .active { width: 35px; border: 1px solid #4fa9ec; border-radius: 2px; background: #d9edfd; }

/* Desktop and taskbar */
.wallpaper {
  width: 100%;
  height: 13px;
  background: linear-gradient(90deg, #c6d6e6 20%, #b7cae4 80%);
}

.taskbar {
  height: 64px;
  display: grid;
  grid-template-columns: 1fr auto 1fr;
  align-items: center;
  padding-bottom: 3px;
  border-top: 1px solid #cfd8ea;
  background: linear-gradient(90deg, #e0eaf7 0%, #dce6f8 25%, #d7e0f6 40%, #d9e0f3 60%, #dbe4f5 75%, #dfebf8 88%, #dfebf8 100%);
}

.pinned { grid-column: 2; display: flex; align-items: center; gap: 8px; padding-right: 33px; }
.start { width: 50px; height: 48px; }

.task-search {
  width: 254px;
  height: 41px;
  display: flex;
  align-items: center;
  gap: 12px;
  padding: 0 11px;
  border: 1px solid #cbd3e4;
  border-radius: 21px;
  background: #f5f7fd;
  font-size: 17px;
}

.app { position: relative; width: 48px; height: 48px; border-radius: 5px; }
.current { background: #edf1fb; }
.current::after,
.running::after {
  content: "";
  position: absolute;
  bottom: 0;
  width: 14px;
  height: 4px;
  border-radius: 2px;
  background: #bfd3ee;
}
.running::after { width: 12px; background: #8b9db8; }

.tray { justify-self: end; display: flex; align-items: center; padding-right: 18px; }
.status { gap: 10px; margin: 0 25px 0 22px; }

.clock {
  flex-direction: column;
  align-items: flex-end;
  padding-top: 6px;
  font-family: "Liberation Sans", Arial, sans-serif;
  line-height: 23px;
}
```
